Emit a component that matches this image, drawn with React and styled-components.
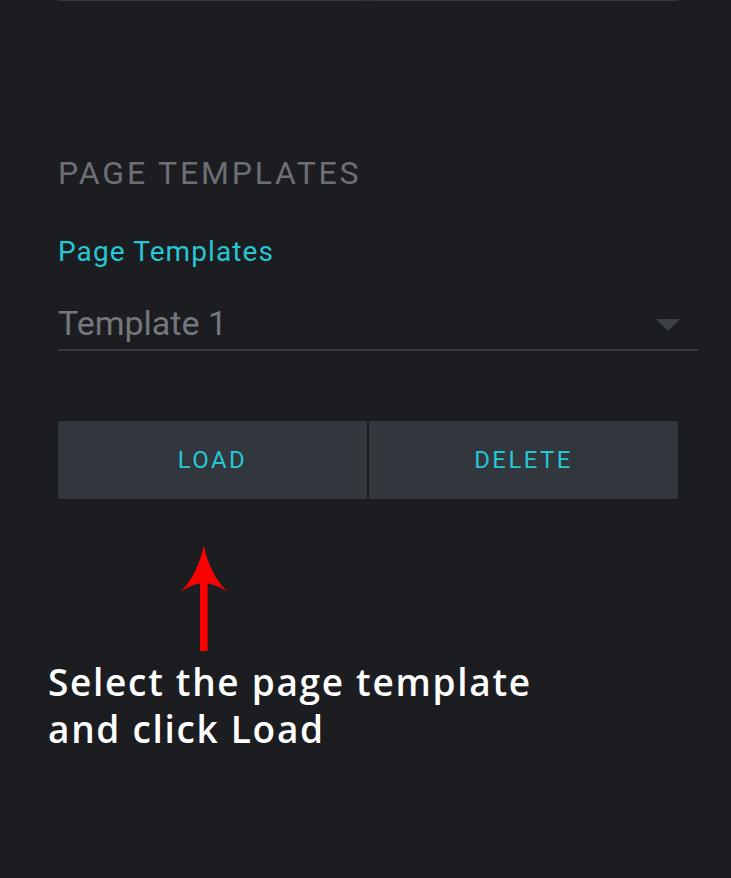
import React from 'react';
import styled, { createGlobalStyle } from 'styled-components';

const GlobalStyle = createGlobalStyle`
    html, body {
        margin: 0;
        padding: 0;
        background: #1c1d21;
    }
    * {
        box-sizing: border-box;
    }
`

const Page = styled.div`
    width: 731px;
    min-height: 878px;
    background: #1c1d21;
    font-family: Roboto, "Liberation Sans", sans-serif;
    overflow: hidden;
`

const Panel = styled.section`
    padding: 0 33px 0 58px;
    display: flex;
    flex-direction: column;
`

const ButtonRow = styled.div`
    display: flex;
    gap: 2px;
    width: 620px;
    margin-top: ${props => props.$top || 0}px;
`

const Button = styled.button`
    flex: 1;
    height: ${props => props.$height || 78}px;
    border: 0;
    padding: 0;
    background: #32363d;
    color: #26c6d4;
    font-family: Roboto, "Liberation Sans", sans-serif;
    font-size: 24px;
    letter-spacing: 2.4px;
    text-transform: uppercase;
    cursor: pointer;
`

const SectionTitle = styled.h2`
    margin: 152px 0 0;
    font-size: 32px;
    font-weight: 400;
    line-height: 40px;
    letter-spacing: 2.8px;
    color: #6c6f73;
    text-transform: uppercase;
`

const FieldLabel = styled.label`
    display: block;
    margin-top: 43px;
    font-size: 28px;
    line-height: 32px;
    letter-spacing: 1.1px;
    color: #26c6d4;
`

const Select = styled.div`
    display: flex;
    align-items: center;
    justify-content: space-between;
    margin-top: 35px;
    padding-bottom: 6px;
    border-bottom: 2px solid #363a40;
`

const SelectValue = styled.span`
    font-size: 34px;
    line-height: 40px;
    color: #74777b;
`

const Caret = styled.span`
    width: 0;
    height: 0;
    margin: 4px 18px 0 0;
    border-left: 12px solid transparent;
    border-right: 12px solid transparent;
    border-top: 12px solid #3c4047;
`

const Arrow = styled.svg`
    display: block;
    margin: 45px 0 0 121px;
`

const Annotation = styled.p`
    margin: 6px 0 0;
    padding-left: 48px;
    font-family: "Open Sans", "DejaVu Sans", sans-serif;
    font-size: 37px;
    font-weight: 600;
    line-height: 47px;
    letter-spacing: 1.7px;
    color: #ffffff;
`

function UpArrow() {
    return <Arrow width="50" height="108" viewBox="0 0 50 108">
        <rect x="21" y="36" width="7.6" height="71" fill="#ff0000" />
        <path
            d="M24.8 1.5 Q19 30 1.5 48 Q13 39.5 24.8 39 Q36.5 39.5 48.5 48 Q30.5 30 24.8 1.5 Z"
            fill="#ff0000"
        />
    </Arrow>
}

export default function App() {
    return <Page>
        <GlobalStyle />
        <Panel>
            <ButtonRow>
                <Button $height={1} aria-hidden="true" />
                <Button $height={1} aria-hidden="true" />
            </ButtonRow>
            <SectionTitle>Page Templates</SectionTitle>
            <FieldLabel>Page Templates</FieldLabel>
            <Select>
                <SelectValue>Template 1</SelectValue>
                <Caret />
            </Select>
            <ButtonRow $top={70}>
                <Button>Load</Button>
                <Button>Delete</Button>
            </ButtonRow>
            <UpArrow />
        </Panel>
        <Annotation>
            Select the page template<br />
            and click Load
        </Annotation>
    </Page>
}
